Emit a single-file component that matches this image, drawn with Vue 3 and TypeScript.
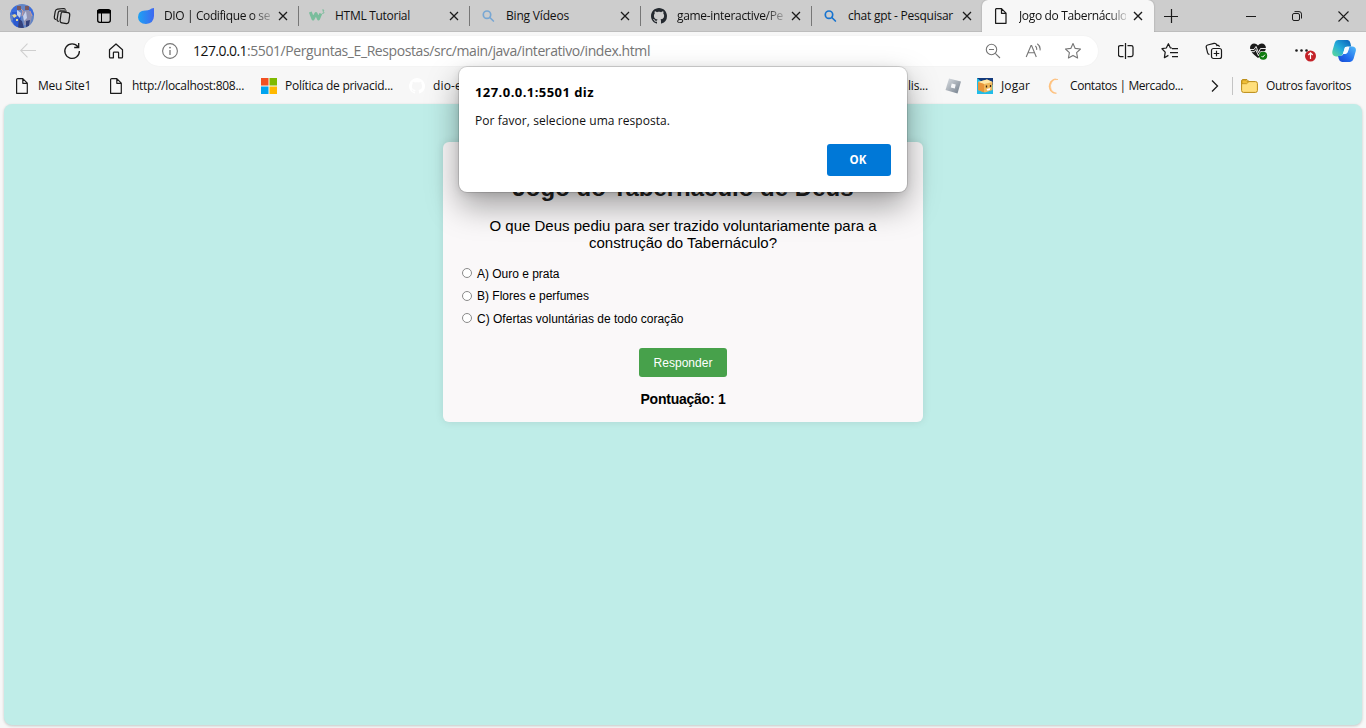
<script setup lang="ts">
import { ref, type Directive } from 'vue'

interface Tab { icon: string; title: string; width: number; clip?: boolean }
interface Bookmark { icon: string; label: string; width: number; kind: string }

const tabs: Tab[] = [
  { icon: 'dio', title: 'DIO | Codifique o se', width: 106, clip: true },
  { icon: 'w3', title: 'HTML Tutorial', width: 75 },
  { icon: 'search-pale', title: 'Bing Vídeos', width: 63 },
  { icon: 'github', title: 'game-interactive/Pe', width: 106, clip: true },
  { icon: 'search', title: 'chat gpt - Pesquisar', width: 105 },
]

const bookmarks: Bookmark[] = [
  { icon: 'page', label: 'Meu Site1', width: 53, kind: 'site' },
  { icon: 'page', label: 'http://localhost:808...', width: 112, kind: 'local' },
  { icon: 'microsoft', label: 'Política de privacid...', width: 108, kind: 'policy' },
  { icon: 'octo', label: 'dio-e', width: 29, kind: 'repo' },
  { icon: '', label: 'lis...', width: 20, kind: 'list' },
  { icon: 'roblox', label: '', width: 0, kind: 'roblox' },
  { icon: 'poki', label: 'Jogar', width: 29, kind: 'play' },
  { icon: 'ring', label: 'Contatos | Mercado...', width: 113, kind: 'contacts' },
]

const options = ['A) Ouro e prata', 'B) Flores e perfumes', 'C) Ofertas voluntárias de todo coração']
const optionWidths = [82.5, 112, 206.500]
const answer = ref<number | null>(null)
const score = ref(1)

// Spreads a single line of text over the given width.
const vFit: Directive<HTMLElement, number> = {
  mounted(el, { value }) {
    const count = (el.textContent ?? '').length
    if (!count || !value) return
    const range = document.createRange()
    range.selectNodeContents(el)
    const natural = range.getBoundingClientRect().width
    el.style.letterSpacing = `${(value - natural) / count}px`
  },
}
</script>

<template>
  <div class="browser">
    <header class="titlebar">
      <svg class="avatar" width="24" height="24" viewBox="0 0 24 24">
        <defs><clipPath id="face"><circle cx="12" cy="12" r="12" /></clipPath></defs>
        <g clip-path="url(#face)">
          <rect width="24" height="24" fill="#6385c6" />
          <path d="M0 3l6-3 2 8-8 3zM17 0l7 4v8l-5-5zM1 17l6-3v8z" fill="#3b6ddc" />
          <path d="M2 8h6l3 6-2 9H4z" fill="#2c5ad0" />
          <path d="M13 7l6-1 3 6-2 9h-6z" fill="#9092b2" />
          <path d="M7 2h4v4H7zM15 2h4v4h-4z" fill="#7b5a60" />
          <path d="M7 6l4 3-1 5-3-3zM13 12l3-5 1 7-3 3z" fill="#c5d0eb" />
          <path d="M2 11l3-1 2 2-3 2zM6 15h2v2H6z" fill="#e2d69a" />
          <path d="M9 15l3 2 2 7H8zM16 17l4-1-1 6-3 1z" fill="#34417c" />
          <path d="M11 5l2 2-1 5M20 7l2 5" stroke="#c89a9b" fill="none" />
        </g>
      </svg>
      <svg class="workspaces" width="18" height="18" viewBox="0 0 18 18">
        <g fill="none" stroke="#1b1b1b" stroke-width="1.2" stroke-linejoin="round" stroke-linecap="round">
          <rect x="7.500" y="5.300" width="8.800" height="11" rx="2.200" transform="rotate(8 12 11)" />
          <path d="M5.300 14.300q-1.500-.4-1.200-2l1.100-6.600q.3-1.800 2.100-1.800l6 .2M2.700 12.500Q1 12 1.300 10.200l.9-5.500Q2.600 2.500 4.500 2.200l6-.7q1.300 0 1.700.8" />
        </g>
      </svg>
      <svg class="tabmenu" width="16" height="16" viewBox="0 0 16 16">
        <rect x="1.700" y="1.700" width="12.600" height="12.600" rx="2" fill="none" stroke="#000" stroke-width="1.300" />
        <path d="M1.500 2.500h13V5h-13z" fill="#000" stroke="#000" />
        <path d="M5.500 5v9" stroke="#000" />
      </svg>

      <div v-for="tab in tabs" :key="tab.title" class="tab">
        <svg width="16" height="16" viewBox="0 0 16 16">
          <template v-if="tab.icon === 'dio'">
            <defs><linearGradient id="dio"><stop stop-color="#1ea2f3" /><stop offset="1" stop-color="#3f68f0" /></linearGradient></defs>
            <path d="M16 0v8q-.3 7.500-8 8Q.4 15.400 0 9.200 0 2.600 7 2.500q3 .1 4.500-.8Q13.500.2 16 0z" fill="url(#dio)" />
          </template>
          <g v-else-if="tab.icon === 'w3'" fill="none" stroke="#7abd9c">
            <path d="M1.300 4l2.700 7 3-5.500L9.500 11l2.300-5.500" stroke-width="3" stroke-linejoin="round" />
            <path d="M13 2h2l-1 1.500q1.500.2.8 1.600-.7.6-1.700.2" stroke-width=".9" />
          </g>
          <path v-else-if="tab.icon === 'github'" fill="#24292f" d="M8 0C3.580 0 0 3.580 0 8c0 3.540 2.290 6.530 5.470 7.590.4.070.55-.17.55-.38 0-.19-.01-.82-.01-1.490-2.010.37-2.530-.49-2.690-.94-.09-.23-.48-.94-.82-1.130-.28-.15-.68-.52-.01-.53.63-.01 1.080.58 1.230.82.72 1.210 1.870.87 2.330.66.07-.52.28-.87.51-1.070-1.780-.2-3.640-.89-3.640-3.950 0-.87.31-1.590.82-2.150-.08-.2-.36-1.020.08-2.120 0 0 .67-.21 2.200.82.64-.18 1.320-.27 2-.27s1.360.09 2 .27c1.530-1.040 2.200-.82 2.200-.82.44 1.100.16 1.920.08 2.120.51.56.82 1.270.82 2.150 0 3.070-1.870 3.750-3.650 3.950.29.25.54.73.54 1.480 0 1.070-.01 1.930-.01 2.200 0 .21.15.46.55.38A8.010 8.010 0 0 0 16 8c0-4.420-3.580-8-8-8z" />
          <g v-else fill="none" :stroke="tab.icon === 'search' ? '#1773cf' : '#78a7d3'" stroke-width="1.700" stroke-linecap="round">
            <circle cx="7" cy="6.700" r="3.700" /><path d="M9.800 9.500l3.600 3.500" />
          </g>
        </svg>
        <span class="tab-title" :class="{ faded: tab.clip }"><span v-fit="tab.width">{{ tab.title }}</span></span>
        <svg class="close" width="10" height="10" viewBox="0 0 10 10"><path d="M1 1l8 8M9 1L1 9" stroke="#1b1b1b" stroke-width="1.250" /></svg>
      </div>

      <div class="tab active">
        <svg width="16" height="16" viewBox="0 0 16 16"><path d="M3.500.6h5l4.500 4.500v10.200H2.600V1.500q0-.9.900-.9zM8.500.8v4.500H13" fill="none" stroke="#1b1b1b" stroke-width="1.250" stroke-linejoin="round" /></svg>
        <span class="tab-title faded"><span v-fit="108">Jogo do Tabernáculo</span></span>
        <svg class="close" width="10" height="10" viewBox="0 0 10 10"><path d="M1 1l8 8M9 1L1 9" stroke="#1b1b1b" stroke-width="1.400" /></svg>
      </div>
      <svg class="newtab" width="14" height="14" viewBox="0 0 14 14"><path d="M7.500 0v14M0 7.500h14" stroke="#1b1b1b" stroke-width="1.200" /></svg>
      <div class="window-buttons">
        <svg width="10" height="10" viewBox="0 0 10 10"><path d="M0 5.500h10" stroke="#1b1b1b" /></svg>
        <svg width="10" height="10" viewBox="0 0 10 10"><g fill="none" stroke="#1b1b1b"><rect x=".5" y="2.500" width="7" height="7" rx="1.500" /><path d="M2.500.6H7q2.500 0 2.500 2.500v4.400" /></g></svg>
        <svg width="11" height="11" viewBox="0 0 11 11"><path d="M.5.5l10 10M10.500.5l-10 10" stroke="#1b1b1b" stroke-width="1.100" /></svg>
      </div>
    </header>

    <nav class="toolbar">
      <span class="tool"><svg width="16" height="16" viewBox="0 0 16 16"><path d="M16 7.500H.7M7.500.7L.7 7.500l6.800 6.800" fill="none" stroke="#cfcfcf" stroke-width="1.100" /></svg></span>
      <span class="tool"><svg width="18" height="18" viewBox="0 0 18 18"><path d="M15 4.800A7.300 7.300 0 1 0 16.400 9M15.700 1v4.500h-4.500" fill="none" stroke="#1b1b1b" stroke-width="1.300" /></svg></span>
      <span class="tool"><svg width="16" height="18" viewBox="0 0 16 18"><path d="M1.500 7.700L8 2l6.500 5.700v7.200q0 .9-.9.900h-3v-5q0-.8-.8-.8H6.200q-.8 0-.8.800v5h-3q-.9 0-.9-.9z" fill="none" stroke="#1b1b1b" stroke-width="1.250" stroke-linejoin="round" /></svg></span>

      <div class="address">
        <svg width="16" height="16" viewBox="0 0 16 16"><circle cx="8" cy="8" r="7.400" fill="none" stroke="#767676" stroke-width="1.100" /><path d="M8 7v5" stroke="#767676" stroke-width="1.300" /><circle cx="8" cy="4.600" r=".9" fill="#767676" /></svg>
        <div class="url"><span v-fit="54" class="host">127.0.0.1</span><span v-fit="403">:5501/Perguntas_E_Respostas/src/main/java/interativo/index.html</span></div>
        <span class="inner-tool"><svg width="16" height="16" viewBox="0 0 16 16"><g fill="none" stroke="#767676" stroke-width="1.100"><circle cx="6.500" cy="6.500" r="5.200" /><path d="M4 6.500h5M10.300 10.300l4.700 4.700" /></g></svg></span>
        <span class="inner-tool"><svg width="16" height="16" viewBox="0 0 16 16"><g fill="none" stroke="#767676" stroke-width="1.100"><path d="M1.200 14L6 2.500h.6L11.300 14M3 9.800h6.500M10.300 2.800q1.800 1.500 1.300 4M12.300.7q3.500 2.500 2.700 6.700" /></g></svg></span>
        <span class="inner-tool"><svg width="18" height="18" viewBox="0 0 18 18"><path d="M9 1.500l2.200 4.900 5.300.6-3.900 3.700 1 5.300L9 13.400 4.400 16l1-5.300L1.500 7l5.300-.6z" fill="none" stroke="#767676" stroke-width="1.100" stroke-linejoin="round" /></svg></span>
      </div>

      <span class="tool split"><svg width="16" height="16" viewBox="0 0 16 16"><path d="M7.500 0v16M5.500 2.500H2.300Q.5 2.500.5 4.200v7.600q0 1.700 1.800 1.700h3.200M9.500 2.500h3.700q1.800 0 1.800 1.700v7.600q0 1.700-1.800 1.700H9.500" fill="none" stroke="#1b1b1b" stroke-width="1.250" /></svg></span>
      <span class="tool"><svg width="18" height="18" viewBox="0 0 18 18"><path d="M11 6L9.300 5.800 7.400 1.700 5.300 6 1 6.700l3.200 3.400-.8 5.600 4-2.300M11 6.500h6M9 10.500h8M11 14.500h6" fill="none" stroke="#1b1b1b" stroke-width="1.250" stroke-linejoin="round" /></svg></span>
      <span class="tool"><svg width="18" height="18" viewBox="0 0 18 18"><g fill="none" stroke="#1b1b1b" stroke-width="1.200"><rect x="6.500" y="6.500" width="10" height="10" rx="2" /><path d="M11.500 8.700v5.600M8.700 11.500h5.600M4.500 12.500Q3 12.300 2.600 10.800L1.300 5.500Q.8 3.500 2.700 3L9 1.400q2-.4 2.700 1.400l.3 1.300M12 3.200q1.900-.2 2.500 1.500" /></g></svg></span>
      <span class="tool"><svg width="20" height="18" viewBox="0 0 20 18"><path d="M10 3.500C7.500 0 2 1 2 6q0 4 8 10 7-5 8-9.500C18 1 12.500 0 10 3.500z" fill="#1b1b1b" /><path d="M1 7.500h5l2-3 2.500 6 2-4H18M3 9.700h3.300l1.500-2 2.600 6 2.200-4H17" fill="none" stroke="#fff" stroke-width=".9" /><circle cx="15.200" cy="13.800" r="4" fill="#107c10" /><path d="M13.500 14l1.200 1.200 2.200-2.500" fill="none" stroke="#fff" /></svg></span>
      <span class="tool"><svg class="more" width="24" height="20" viewBox="0 0 24 20"><g fill="#1b1b1b"><circle cx="3.500" cy="7.500" r="1.300" /><circle cx="8.500" cy="7.500" r="1.300" /><circle cx="13.500" cy="7.500" r="1.300" /></g><circle cx="17.500" cy="13" r="5.500" fill="#c42329" /><path d="M17.500 16V10M15.300 12l2.200-2.200 2.200 2.200" fill="none" stroke="#fff" stroke-width="1.200" /></svg></span>
      <span class="copilot"><svg width="24" height="24" viewBox="0 0 24 24">
        <defs>
          <linearGradient id="cyan" x1="0" y1="1" x2="1" y2="0"><stop stop-color="#63dc94" /><stop offset=".45" stop-color="#25aeda" /><stop offset="1" stop-color="#075cba" /></linearGradient>
          <linearGradient id="blue" x1="1" y1="0" x2="0" y2="1"><stop stop-color="#51bcf9" /><stop offset=".6" stop-color="#206bed" /><stop offset="1" stop-color="#1749d0" /></linearGradient>
        </defs>
        <path d="M6 1h9.500q2.300.2 2.900 3l.8 3.500h-4q-2 0-2.600 2l-1.500 5q-.7 2-3 2.500L6 17.500H4Q-.5 17 .4 12L2.700 4Q3.500 1.200 6 1z" fill="url(#cyan)" />
        <path d="M17.500 7.500h2.700q4.400.5 3.600 4.500L21.500 20q-.9 2.700-3.500 3H10q-2.500-.3-3.200-3L6 17h2.500q2.300-.3 3.200-2.500h1.800q2-.5 2.600-2.500z" fill="url(#blue)" />
        <path d="M13 8h4.300l-1.600 5q-.7 2-2.500 2h-2.300z" fill="#f7fbff" />
      </svg></span>
    </nav>

    <div class="bookmarks">
      <div v-for="mark in bookmarks" :key="mark.kind" class="bookmark" :class="mark.kind">
        <svg v-if="mark.icon" width="16" height="16" viewBox="0 0 16 16">
          <path v-if="mark.icon === 'page'" d="M3.800.6h5l4.500 4.500v10.200H2.600V1.500q0-.9 1.200-.9zM8.800.8v4.500h4.500" fill="none" stroke="#1b1b1b" stroke-width="1.200" stroke-linejoin="round" />
          <g v-else-if="mark.icon === 'microsoft'"><path d="M0 0h7.500v7.500H0z" fill="#f25022" /><path d="M8.500 0H16v7.500H8.500z" fill="#7fba00" /><path d="M0 8.500h7.500V16H0z" fill="#00a4ef" /><path d="M8.500 8.500H16V16H8.500z" fill="#ffb900" /></g>
          <path v-else-if="mark.icon === 'octo'" fill="#fff" d="M8 0a8 8 0 0 0-2.500 15.600c.4.100.5-.2.500-.4v-1.500C3.800 14.200 3.300 12.800 3.300 12.800c-.4-.9-1-1.200-1-1.200 1-.2 1.500.7 1.500.7.700 1.200 1.900.9 2.300.7l.5-1.100c-3-.4-3.700-1.700-3.700-4 0-.9.300-1.600.8-2.100-.2-.5-.3-1.200.1-2.100 0 0 .7-.2 2.200.8a8 8 0 0 1 4 0c1.500-1 2.200-.8 2.200-.8.400.9.200 1.600.1 2.100.5.500.8 1.200.8 2.100 0 2.500-.8 3.600-3.700 4 .4.400.6.900.6 1.700v1.600c0 .2.200.5.500.4A8 8 0 0 0 8 0z" />
          <g v-else-if="mark.icon === 'roblox'">
            <defs><linearGradient id="silver" x2="1" y2="1"><stop stop-color="#dce0e5" /><stop offset=".5" stop-color="#a8afb7" /><stop offset="1" stop-color="#6e7a88" /></linearGradient></defs>
            <path d="M4 .5L16 3.500 12.500 15.500.5 12z" fill="url(#silver)" /><path d="M6.700 5.500l4 .9-.9 4-4-1z" fill="#f7f8fa" />
          </g>
          <g v-else-if="mark.icon === 'poki'">
            <path d="M0 0h16v16H0z" fill="#20bce9" /><path d="M0 0h16v7H9z" fill="#133a7c" />
            <path d="M1 4l9-2.500L15.500 4v8L8 14.500 1 12z" fill="#f0b95b" /><path d="M1 4l9-2.500L15.500 4 7 6z" fill="#ffe9aa" /><path d="M1 4l6 2v8.500L1 12z" fill="#e8953b" />
            <path d="M9.500 7.500v2M13.500 7v2" stroke="#392315" stroke-width="1.300" /><path d="M9.500 11l4-1-.7 2-2.300.8z" fill="#fff" />
          </g>
          <path v-else d="M12 1.500Q8-.5 4.500 3.500 1.500 8.500 4.500 13q2.500 3.200 6 2.200-3.800-.5-5.300-3.700Q3.200 7.500 6.200 3.500 8.500.8 12 1.500z" fill="#ffc27c" stroke="#ffb76a" stroke-width=".5" />
        </svg>
        <span v-if="mark.label" v-fit="mark.width">{{ mark.label }}</span>
      </div>
      <svg class="chevron" width="8" height="12" viewBox="0 0 8 12"><path d="M1 .5L6.500 6 1 11.500" fill="none" stroke="#1b1b1b" stroke-width="1.300" /></svg>
      <div class="others">
        <svg width="17" height="16" viewBox="0 0 17 16"><path d="M.6 3Q.6 1.600 2 1.600h4l2 2h6.500q1.900 0 1.900 1.900v7q0 1.900-1.900 1.900h-12Q.6 14.400.6 12.500z" fill="#ffdf7c" stroke="#b98a13" /><path d="M1 5.700h4.600L8 3.600H6L4.600 2H2Q1 2 1 3z" fill="#f0bf37" stroke="#b98a13" stroke-width=".7" /></svg>
        <span v-fit="85">Outros favoritos</span>
      </div>
    </div>

    <main class="viewport">
      <section class="quiz">
        <h1><span v-fit="341">Jogo do Tabernáculo de Deus</span></h1>
        <p class="question"><span v-fit="387">O que Deus pediu para ser trazido voluntariamente para a</span><br /><span v-fit="188">construção do Tabernáculo?</span></p>
        <div class="options">
          <label v-for="(option, i) in options" :key="option">
            <input v-model="answer" type="radio" name="answer" :value="i" /><span v-fit="optionWidths[i]">{{ option }}</span>
          </label>
        </div>
        <button class="submit" type="button"><span v-fit="59">Responder</span></button>
        <p class="score"><span v-fit="85">Pontuação: {{ score }}</span></p>
      </section>
    </main>

    <div class="dialog" role="alertdialog">
      <h2><span v-fit="119">127.0.0.1:5501 diz</span></h2>
      <p><span v-fit="195">Por favor, selecione uma resposta.</span></p>
      <button type="button"><span v-fit="17">OK</span></button>
    </div>
  </div>
</template>

<style>
body { margin: 0; overflow: hidden; }
</style>

<style scoped>
* { box-sizing: border-box; }
.browser { position: relative; width: 1366px; height: 728px; display: flex; flex-direction: column; overflow: hidden; background: #f7f7f7; color: #111; font: 12px/18px "Open Sans", "Noto Sans", sans-serif; white-space: nowrap; }
svg { display: block; flex: none; }
.titlebar { height: 32px; flex: none; display: flex; align-items: center; background: #cdcdcd; box-shadow: inset 0 -1px #bdbdbd; padding-left: 10px; }
.workspaces { margin-left: 19px; }
.tabmenu { margin-left: 25px; margin-right: 15px; }
.tab { width: 171px; height: 32px; display: flex; align-items: center; padding-left: 10px; flex: none; }
.tab::before { content: ""; width: 1px; height: 20px; background: #777; margin-left: -10px; margin-right: 10px; }
.tab-title { width: 107px; margin-left: 10px; }
.faded { -webkit-mask-image: linear-gradient(to right, #000 82%, #0003); mask-image: linear-gradient(to right, #000 82%, #0003); }
.close { margin-left: 7px; }
.active { width: 172px; background: #f7f7f7; border-radius: 6px 6px 0 0; padding-left: 11px; box-shadow: 0 0 2px #0004; clip-path: inset(0 -2px 0 -2px); }
.active::before { display: none; }
.newtab { margin-left: 10px; }
.window-buttons { margin-left: auto; margin-right: 17px; display: flex; align-items: center; gap: 36px; }
.toolbar { height: 38px; flex: none; display: flex; align-items: center; }
.tool { width: 44px; display: flex; justify-content: center; }
.tool:first-child { margin-left: 6px; }
.address { width: 954px; height: 30px; margin-left: 6px; background: #fff; border-radius: 15px; display: flex; align-items: center; padding-left: 18px; padding-right: 5px; box-shadow: 0 0 2px #0000000c; }
.url { flex: 1; margin-left: 15px; font-size: 14px; line-height: 20px; color: #767676; }
.host { color: #111; }
.inner-tool { width: 40px; display: flex; justify-content: center; }
.split { margin-left: 6px; }
.more { margin-left: 5px; margin-top: 3px; }
.copilot { width: 40px; display: flex; justify-content: center; }
.bookmarks { height: 34px; flex: none; display: flex; align-items: center; padding-left: 14px; padding-bottom: 2px; }
.bookmark { display: flex; align-items: center; gap: 8px; flex: none; }
.site { width: 94px; }
.local { width: 153px; }
.policy { width: 148px; }
.repo { width: 499px; }
.list { width: 37px; }
.roblox { width: 32px; }
.play { width: 69px; }
.contacts { width: 165px; }
.others { margin-left: 13px; height: 18px; border-left: 1px solid #c4c4c4; padding-left: 8px; display: flex; align-items: center; gap: 8px; }
.viewport { flex: none; width: 1358px; height: 621px; margin-left: 4px; background: #bfede8; border-radius: 8px; box-shadow: 0 1px 3px #0003; font-family: "Liberation Sans", Arial, sans-serif; color: #000; display: flex; justify-content: center; align-items: flex-start; padding-top: 38px; }
.quiz { width: 480px; height: 280px; background: #faf8f9; border-radius: 6px; box-shadow: 0 0 8px #0000001a; padding: 32px 18px 0; display: flex; flex-direction: column; align-items: center; }
h1 { margin: 0; font-size: 24px; line-height: 28px; color: #222; }
.question { margin: 15px 0 0; font-size: 15px; line-height: 17px; text-align: center; }
.options { align-self: stretch; display: flex; flex-direction: column; margin-top: 11px; padding-left: 1px; }
.options label { height: 22.500px; display: flex; align-items: center; font-size: 12px; }
.options label span { padding-top: 1px; }
.options input { appearance: none; width: 10px; height: 10px; margin: 0 5px 0 0; border: 1px solid #8a8a8a; border-radius: 50%; background: #fff; }
.submit { margin-top: 18px; width: 88px; height: 29px; flex: none; border: 0; padding: 1px 0 0; border-radius: 3px; background: #47a14b; color: #fff; font: 12px "Liberation Sans", Arial, sans-serif; }
.score { margin: 13px 0 0; font-size: 14px; line-height: 18px; font-weight: 700; }
.dialog { position: absolute; left: 459px; top: 67px; width: 448px; height: 125px; background: #fff; border-radius: 8px; box-shadow: 0 0 0 1px #0000001f, 0 14px 32px #0000005c, 0 2px 8px #0000001a; padding: 16px; display: flex; flex-direction: column; color: #111; }
.dialog h2 { margin: 0; font-size: 13px; line-height: 18px; font-weight: 700; color: #000; }
.dialog p { margin: 11px 0 0; line-height: 18px; }
.dialog button { align-self: flex-end; width: 64px; height: 32px; flex: none; margin-top: 14px; border: 0; border-radius: 3px; background: #0078d7; color: #fff; font: 700 11.500px "Open Sans", "Noto Sans", sans-serif; padding: 0 2px 1px 0; }
</style>
